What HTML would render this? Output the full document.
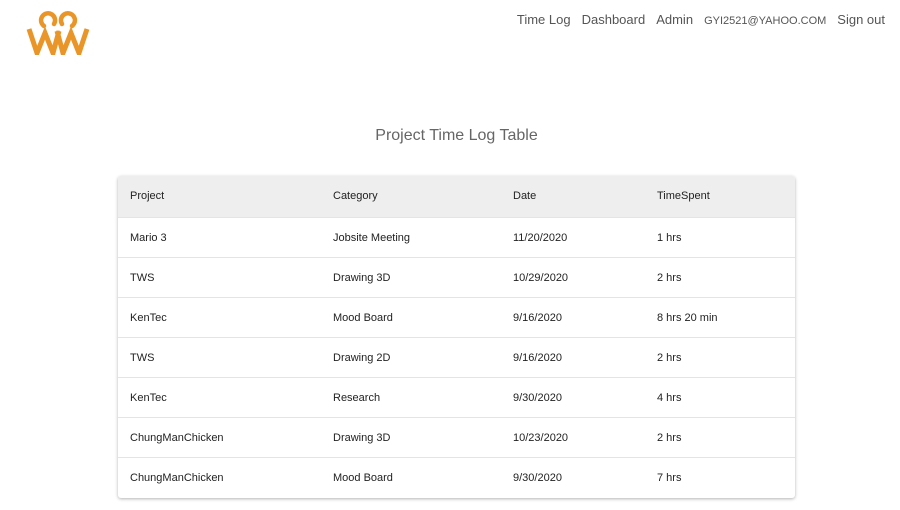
<!DOCTYPE html><html><head><style>
body{margin:0;width:900px;height:510px;background:#fff;font-family:"Liberation Sans",sans-serif;position:relative;overflow:hidden}
.nav{position:absolute;top:12px;right:15px;font-size:13px;color:#555}
.nav span{margin-left:11px}
h1{position:absolute;top:127px;left:0;width:913px;text-align:center;margin:0;font-size:16px;font-weight:normal;color:#666}
.t{position:absolute;left:118px;top:176px;width:677px;box-shadow:0 1px 3px rgba(0,0,0,.3);border-radius:3px;overflow:hidden}
.r{height:40px;box-sizing:border-box;border-bottom:1px solid #e4e4e4;position:relative;font-size:11px;color:#222}
.r:last-child{border-bottom:none}
.h{background:#eee;height:42px}
.r div{position:absolute;top:0;line-height:40px}
.a{left:12px}.b{left:215px}.c{left:395px}.d{left:539px}
</style></head><body>
<svg style="position:absolute;left:26px;top:9px" width="64" height="46" viewBox="0 0 64 46">
<g fill="none" stroke="#ea9528" stroke-width="4.5" stroke-linecap="round">
<path d="M18 17 A7 7 0 1 1 28 15"/>
<path d="M46 17 A7 7 0 1 0 36 15"/>
</g>
<g fill="none" stroke="#ea9528" stroke-width="5" stroke-linejoin="miter">
<path d="M3 20 L11 44 L19 24 L27 44 L33 22"/>
<path d="M31 22 L37 44 L45 24 L53 44 L61 20"/>
</g></svg>
<div class="nav"><span>Time Log</span><span>Dashboard</span><span>Admin</span><span style="font-size:11px">GYI2521@YAHOO.COM</span><span>Sign out</span></div>
<h1>Project Time Log Table</h1>
<div class="t">
<div class="r h"><div class="a">Project</div><div class="b">Category</div><div class="c">Date</div><div class="d">TimeSpent</div></div>
<div class="r"><div class="a">Mario 3</div><div class="b">Jobsite Meeting</div><div class="c">11/20/2020</div><div class="d">1 hrs</div></div>
<div class="r"><div class="a">TWS</div><div class="b">Drawing 3D</div><div class="c">10/29/2020</div><div class="d">2 hrs</div></div>
<div class="r"><div class="a">KenTec</div><div class="b">Mood Board</div><div class="c">9/16/2020</div><div class="d">8 hrs 20 min</div></div>
<div class="r"><div class="a">TWS</div><div class="b">Drawing 2D</div><div class="c">9/16/2020</div><div class="d">2 hrs</div></div>
<div class="r"><div class="a">KenTec</div><div class="b">Research</div><div class="c">9/30/2020</div><div class="d">4 hrs</div></div>
<div class="r"><div class="a">ChungManChicken</div><div class="b">Drawing 3D</div><div class="c">10/23/2020</div><div class="d">2 hrs</div></div>
<div class="r"><div class="a">ChungManChicken</div><div class="b">Mood Board</div><div class="c">9/30/2020</div><div class="d">7 hrs</div></div>
</div>
</body></html>
